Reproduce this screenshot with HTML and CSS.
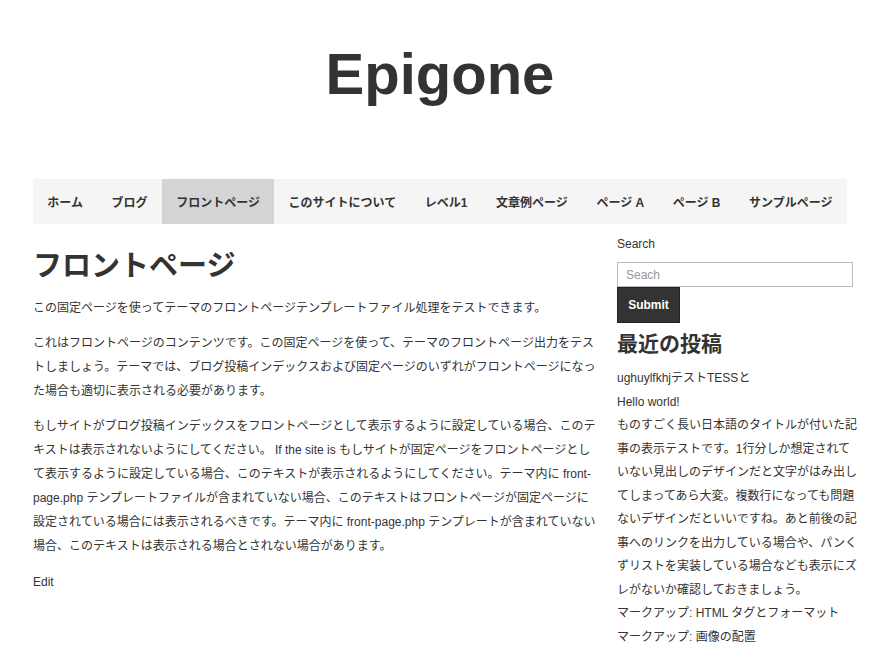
FILE: index.html
```html
<!DOCTYPE html>
<html lang="ja">
<head>
<meta charset="utf-8">
<title>Epigone</title>
<link rel="stylesheet" href="styles.css">
</head>
<body>
<div class="page">
  <header class="site-header">
    <h1 class="site-title">Epigone</h1>
  </header>
  <nav class="main-nav">
    <a class="nav-item" href="#">ホーム</a>
    <a class="nav-item" href="#">ブログ</a>
    <a class="nav-item active" href="#">フロントページ</a>
    <a class="nav-item" href="#">このサイトについて</a>
    <a class="nav-item" href="#">レベル1</a>
    <a class="nav-item" href="#">文章例ページ</a>
    <a class="nav-item" href="#">ページ A</a>
    <a class="nav-item" href="#">ページ B</a>
    <a class="nav-item" href="#">サンプルページ</a>
  </nav>
  <div class="content">
    <main class="main">
      <h2 class="entry-title">フロントページ</h2>
      <p>この固定ページを使ってテーマのフロントページテンプレートファイル処理をテストできます。</p>
      <p>これはフロントページのコンテンツです。この固定ページを使って、テーマのフロントページ出力をテストしましょう。テーマでは、ブログ投稿インデックスおよび固定ページのいずれがフロントページになった場合も適切に表示される必要があります。</p>
      <p>もしサイトがブログ投稿インデックスをフロントページとして表示するように設定している場合、このテキストは表示されないようにしてください。 If the site is もしサイトが固定ページをフロントページとして表示するように設定している場合、このテキストが表示されるようにしてください。テーマ内に front-page.php テンプレートファイルが含まれていない場合、このテキストはフロントページが固定ページに設定されている場合には表示されるべきです。テーマ内に front-page.php テンプレートが含まれていない場合、このテキストは表示される場合とされない場合があります。</p>
      <p class="edit"><a href="#">Edit</a></p>
    </main>
    <aside class="sidebar">
      <form class="search">
        <label class="search-label">Search</label>
        <input class="search-input" type="text" placeholder="Seach">
        <button class="search-btn" type="button">Submit</button>
      </form>
      <h3 class="widget-title">最近の投稿</h3>
      <ul class="recent">
        <li><a href="#">ughuylfkhjテストTESSと</a></li>
        <li><a href="#">Hello world!</a></li>
        <li><a href="#">ものすごく長い日本語のタイトルが付いた記事の表示テストです。1行分しか想定されていない見出しのデザインだと文字がはみ出してしまってあら大変。複数行になっても問題ないデザインだといいですね。あと前後の記事へのリンクを出力している場合や、パンくずリストを実装している場合なども表示にズレがないか確認しておきましょう。</a></li>
        <li><a href="#">マークアップ: HTML タグとフォーマット</a></li>
        <li><a href="#">マークアップ: 画像の配置</a></li>
      </ul>
    </aside>
  </div>
</div>
</body>
</html>
```

FILE: styles.css
```css
html, body {
  margin: 0;
  padding: 0;
  background: #fff;
}
body {
  font-family: "Liberation Sans", "Noto Sans CJK JP", sans-serif;
  font-size: 12px;
  color: #333;
  overflow: hidden;
}
a {
  color: #333;
  text-decoration: none;
}
.page {
  width: 814px;
  margin: 0 auto;
}
.site-header {
  padding-top: 39px;
  padding-bottom: 70px;
  text-align: center;
}
.site-title {
  margin: 0;
  font-size: 58px;
  line-height: 70px;
  font-weight: bold;
  color: #333;
}
.main-nav {
  display: flex;
  height: 45px;
  background: #f5f5f5;
}
.nav-item {
  display: flex;
  align-items: center;
  padding: 0 14.3px;
  font-weight: bold;
  font-size: 12px;
  color: #333;
  white-space: nowrap;
}
.nav-item.active {
  background: #d4d4d4;
}
.content {
  display: grid;
  grid-template-columns: 563px 240px;
  column-gap: 21px;
  padding-top: 8px;
}
.main p {
  margin: 0 0 11px;
  line-height: 24px;
}
.edit {
  padding-top: 1px;
}
.entry-title {
  margin: 16px 0 12px;
  font-size: 29px;
  line-height: 36px;
  font-weight: bold;
}
.search {
  display: flex;
  flex-direction: column;
  align-items: flex-start;
}
.search-label {
  line-height: 24px;
  margin-bottom: 6px;
}
.search-input {
  box-sizing: border-box;
  width: 236px;
  height: 25px;
  margin: 0;
  border: 1px solid #bbb;
  padding: 0 8px;
  font-family: "Liberation Sans", "Noto Sans CJK JP", sans-serif;
  font-size: 12px;
  color: #333;
  outline: none;
}
.search-input::placeholder {
  color: #999;
}
.search-btn {
  box-sizing: border-box;
  height: 36px;
  width: 63px;
  margin: 0;
  border: 1px solid #222;
  background: #333;
  color: #fff;
  font-family: "Liberation Sans", sans-serif;
  font-weight: bold;
  font-size: 12px;
  padding: 0;
}
.widget-title {
  margin: 7px 0 10px;
  font-size: 21px;
  line-height: 27px;
  font-weight: bold;
}
.recent {
  list-style: none;
  margin: 0;
  padding: 0;
}
.recent li {
  line-height: 23.5px;
}
```
